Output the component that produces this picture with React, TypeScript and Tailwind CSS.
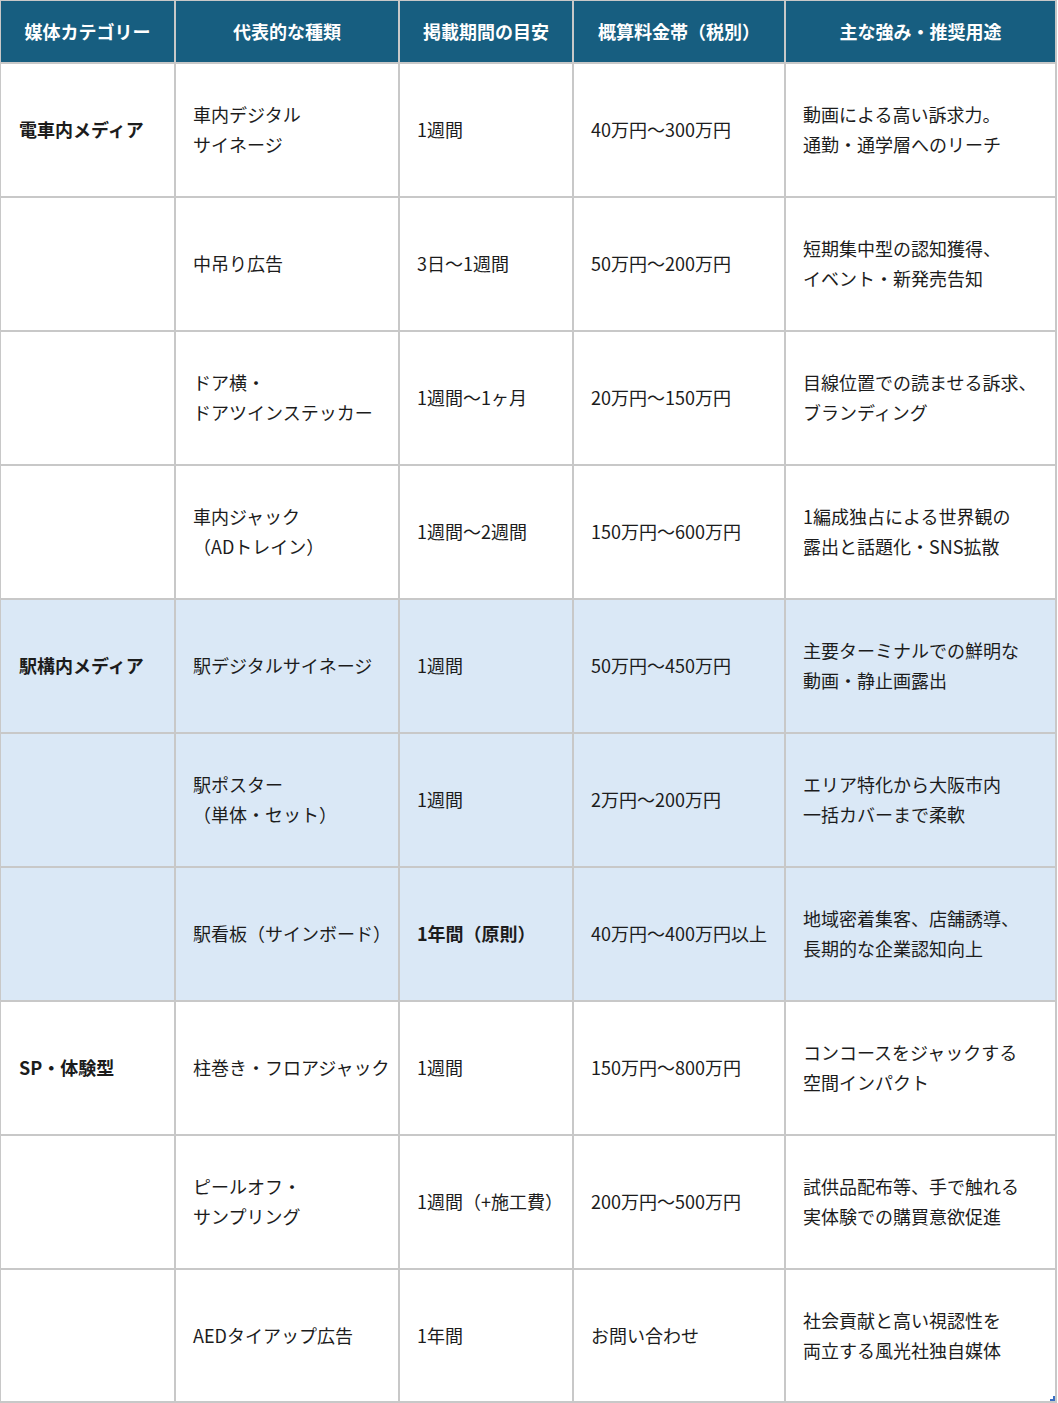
type Row = {
  category?: string;
  kind: string[];
  period: string;
  periodBold?: boolean;
  price: string;
  notes: string[];
  tint?: boolean;
};

const HEADERS = ['媒体カテゴリー', '代表的な種類', '掲載期間の目安', '概算料金帯（税別）', '主な強み・推奨用途'];

const ROWS: Row[] = [
  { category: '電車内メディア', kind: ['車内デジタル', 'サイネージ'], period: '1週間', price: '40万円〜300万円', notes: ['動画による高い訴求力。', '通勤・通学層へのリーチ'] },
  { kind: ['中吊り広告'], period: '3日〜1週間', price: '50万円〜200万円', notes: ['短期集中型の認知獲得、', 'イベント・新発売告知'] },
  { kind: ['ドア横・', 'ドアツインステッカー'], period: '1週間〜1ヶ月', price: '20万円〜150万円', notes: ['目線位置での読ませる訴求、', 'ブランディング'] },
  { kind: ['車内ジャック', '（ADトレイン）'], period: '1週間〜2週間', price: '150万円〜600万円', notes: ['1編成独占による世界観の', '露出と話題化・SNS拡散'] },
  { category: '駅構内メディア', kind: ['駅デジタルサイネージ'], period: '1週間', price: '50万円〜450万円', notes: ['主要ターミナルでの鮮明な', '動画・静止画露出'], tint: true },
  { kind: ['駅ポスター', '（単体・セット）'], period: '1週間', price: '2万円〜200万円', notes: ['エリア特化から大阪市内', '一括カバーまで柔軟'], tint: true },
  { kind: ['駅看板（サインボード）'], period: '1年間（原則）', periodBold: true, price: '40万円〜400万円以上', notes: ['地域密着集客、店舗誘導、', '長期的な企業認知向上'], tint: true },
  { category: 'SP・体験型', kind: ['柱巻き・フロアジャック'], period: '1週間', price: '150万円〜800万円', notes: ['コンコースをジャックする', '空間インパクト'] },
  { kind: ['ピールオフ・', 'サンプリング'], period: '1週間（+施工費）', price: '200万円〜500万円', notes: ['試供品配布等、手で触れる', '実体験での購買意欲促進'] },
  { kind: ['AEDタイアップ広告'], period: '1年間', price: 'お問い合わせ', notes: ['社会貢献と高い視認性を', '両立する風光社独自媒体'] },
];

function Cell({ lines, bold, tint, first }: { lines: string[]; bold?: boolean; tint?: boolean; first?: boolean }) {
  return (
    <div
      className={`flex flex-col justify-center pb-[2px] ${first ? 'pl-[18px]' : 'pl-[17px]'} pr-3 leading-[30px] text-[18px] text-[#1c1c1c] whitespace-nowrap ${
        tint ? 'bg-[#dae8f6]' : 'bg-white'
      } ${bold ? 'font-bold' : 'font-normal'}`}
    >
      {lines.map((l, i) => (
        <span key={i}>{l}</span>
      ))}
    </div>
  );
}

export default function App() {
  return (
    <div className="relative w-[1057px] bg-white" style={{ fontFamily: '"Noto Sans CJK JP", "Noto Sans", sans-serif' }}>
      <div className="grid grid-cols-[173px_222px_172px_210px_269px] grid-rows-[61px_repeat(9,132px)_131px] gap-[2px] bg-[#c8c8c8] pl-px pt-px pr-[2px] pb-[2px]">
        {HEADERS.map((h) => (
          <div key={h} className="flex items-center justify-center bg-[#175e80] text-[18px] font-bold text-white whitespace-nowrap">
            {h}
          </div>
        ))}
        {ROWS.map((r, i) => (
          <div key={i} className="contents">
            <Cell lines={r.category ? [r.category] : []} bold tint={r.tint} first />
            <Cell lines={r.kind} tint={r.tint} />
            <Cell lines={[r.period]} bold={r.periodBold} tint={r.tint} />
            <Cell lines={[r.price]} tint={r.tint} />
            <Cell lines={r.notes} tint={r.tint} />
          </div>
        ))}
      </div>
      {/* resize grip in the corner */}
      <svg className="absolute right-[2px] bottom-[2px]" width="5" height="5" viewBox="0 0 5 5">
        <path d="M5 0V5H0V3H3V0Z" fill="#3a6fc4" />
      </svg>
    </div>
  );
}
